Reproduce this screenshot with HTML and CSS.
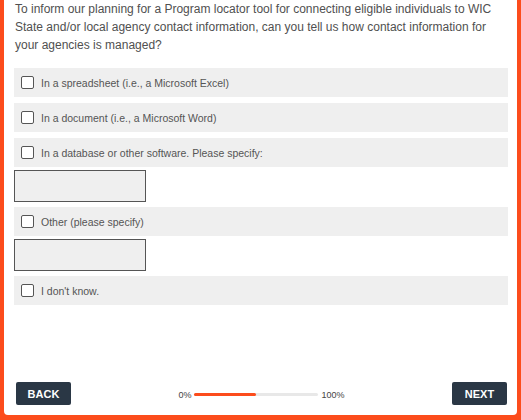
FILE: index.html
```html
<!DOCTYPE html>
<html>
<head>
<meta charset="utf-8">
<link rel="stylesheet" href="styles.css">
</head>
<body>
<div class="frame">
  <div class="card">
    <p class="question">To inform our planning for a Program locator tool for connecting eligible individuals to WIC State and/or local agency contact information, can you tell us how contact information for your agencies is managed?</p>
    <div class="options">
      <label class="option"><span class="box"></span><span class="label">In a spreadsheet (i.e., a Microsoft Excel)</span></label>
      <label class="option"><span class="box"></span><span class="label">In a document (i.e., a Microsoft Word)</span></label>
      <label class="option"><span class="box"></span><span class="label">In a database or other software. Please specify:</span></label>
      <div class="field"></div>
      <label class="option"><span class="box"></span><span class="label">Other (please specify)</span></label>
      <div class="field"></div>
      <label class="option"><span class="box"></span><span class="label">I don't know.</span></label>
    </div>
    <div class="spacer"></div>
    <div class="footer">
      <button class="btn">BACK</button>
      <div class="progress">
        <span class="pct">0%</span>
        <span class="track"><span class="fill" style="width:50%"></span></span>
        <span class="pct">100%</span>
      </div>
      <button class="btn">NEXT</button>
    </div>
  </div>
</div>
</body>
</html>
```
FILE: styles.css
```css
html, body {
  margin: 0;
  padding: 0;
  height: 100%;
}
body {
  background: #fc4c1c;
  font-family: "Liberation Sans", Arial, sans-serif;
}
.frame {
  height: 420px;
  padding: 0 4px 5px 4px;
  box-sizing: border-box;
}
.card {
  background: #fff;
  height: 100%;
  border-radius: 0 0 4px 4px;
  display: flex;
  flex-direction: column;
  padding: 0 9px 0 10px;
  box-sizing: border-box;
}
.question {
  margin: 0;
  padding: 0 0 0 1px;
  font-family: "Liberation Sans", Arial, sans-serif;
  font-size: 12px;
  line-height: 18px;
  color: #505050;
}
.options {
  margin-top: 14px;
  display: flex;
  flex-direction: column;
}
.option {
  display: flex;
  align-items: center;
  background: #efefef;
  height: 29px;
  margin-bottom: 6px;
  padding-left: 7px;
}
.box {
  width: 11px;
  height: 11px;
  border: 1px solid #555;
  border-radius: 2px;
  background: #fff;
  margin-right: 7px;
}
.label {
  font-size: 10.5px;
  color: #555;
}
.field {
  width: 130px;
  height: 30px;
  border: 1px solid #555;
  background: #efefef;
  margin-top: -3px;
  margin-bottom: 5px;
}
.spacer {
  flex: 1;
}
.footer {
  display: flex;
  align-items: center;
  justify-content: space-between;
  padding: 0 1px 10px 2px;
}
.btn {
  background: #2a3745;
  color: #fff;
  border: none;
  border-radius: 2px;
  width: 55px;
  height: 23px;
  font-family: "Liberation Sans", Arial, sans-serif;
  font-weight: bold;
  font-size: 11px;
  padding: 0;
}
.progress {
  display: flex;
  align-items: center;
  gap: 3px;
  margin-top: 2px;
}
.pct {
  font-size: 9px;
  color: #444;
}
.track {
  width: 124px;
  height: 3px;
  background: #e8e8e8;
  border-radius: 2px;
  display: block;
}
.fill {
  display: block;
  height: 100%;
  background: #fc4c1c;
  border-radius: 2px;
}
```
